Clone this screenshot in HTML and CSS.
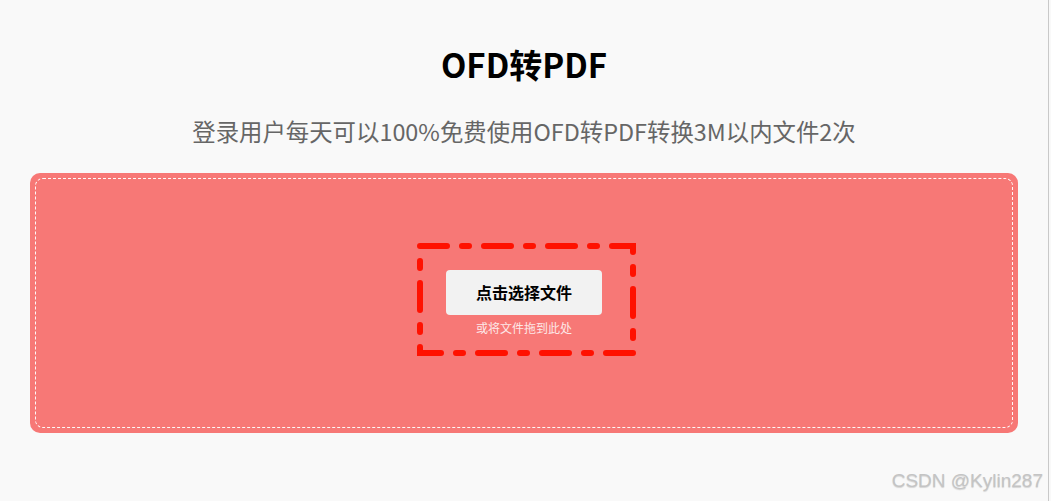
FILE: index.html
```html
<!DOCTYPE html>
<html lang="zh-CN">

<head>
    <meta charset="UTF-8">
    <meta name="viewport" content="width=device-width, initial-scale=1.0">
    <title>OFD转PDF</title>
    <link rel="stylesheet" href="styles.css">
</head>

<body>
    <div class="page">
        <h1 class="title">OFD转PDF</h1>
        <p class="desc">登录用户每天可以100%免费使用OFD转PDF转换3M以内文件2次</p>
        <div class="panel">
            <div class="panel-inner">
                <div class="drop">
                    <svg class="drop-line" width="219" height="113" viewBox="0 0 219 113">
                        <rect x="3" y="3" width="213" height="107" fill="none" stroke="#ff1100" stroke-width="6"
                            stroke-linecap="round" stroke-dasharray="27 15 7 15" />
                    </svg>
                    <div class="btn">点击选择文件</div>
                    <div class="tip">或将文件拖到此处</div>
                </div>
            </div>
        </div>
    </div>
    <div class="mark">CSDN @Kylin287</div>
</body>

</html>
```
FILE: styles.css
```css
* {
    padding: 0;
    margin: 0;
    box-sizing: border-box;
}

html,
body {
    background: #f9f9f9;
    font-family: "Noto Sans CJK SC", "Noto Sans", sans-serif;
}

.page {
    width: 1049px;
    height: 501px;
    border-right: 1px solid #c9c9c9;
    padding: 40px 30px 0 30px;
}

.title {
    text-align: center;
    font-size: 33px;
    font-weight: 700;
    line-height: 48px;
    color: #000;
}

.desc {
    margin-top: 26px;
    text-align: center;
    font-size: 23.4px;
    line-height: 34px;
    color: #666;
}

.panel {
    margin-top: 25px;
    height: 260px;
    background: #f77876;
    border-radius: 10px;
    padding: 5px;
}

.panel-inner {
    height: 100%;
    border: 1px dashed rgba(255, 255, 255, 0.95);
    border-radius: 8px;
    display: flex;
    align-items: center;
    justify-content: center;
}

.drop {
    position: relative;
    width: 219px;
    height: 113px;
    margin-left: 5px;
    margin-top: -7px;
    display: flex;
    flex-direction: column;
    align-items: center;
    padding-top: 27px;
    padding-right: 5px;
}

.drop-line {
    position: absolute;
    left: 0;
    top: 0;
}

.btn {
    position: relative;
    width: 156px;
    height: 45px;
    line-height: 45px;
    background: #f2f2f2;
    border-radius: 4px;
    text-align: center;
    font-size: 16px;
    font-weight: 700;
    color: #000;
}

.tip {
    position: relative;
    margin-top: 3px;
    font-size: 12px;
    line-height: 20px;
    color: #fde8e8;
}

.mark {
    position: absolute;
    right: 8px;
    top: 470px;
    font-family: "Liberation Sans", Arial, sans-serif;
    font-size: 19px;
    color: #c4c4c4;
    text-shadow: 0 1px 1px rgba(0, 0, 0, 0.15);
}
```
